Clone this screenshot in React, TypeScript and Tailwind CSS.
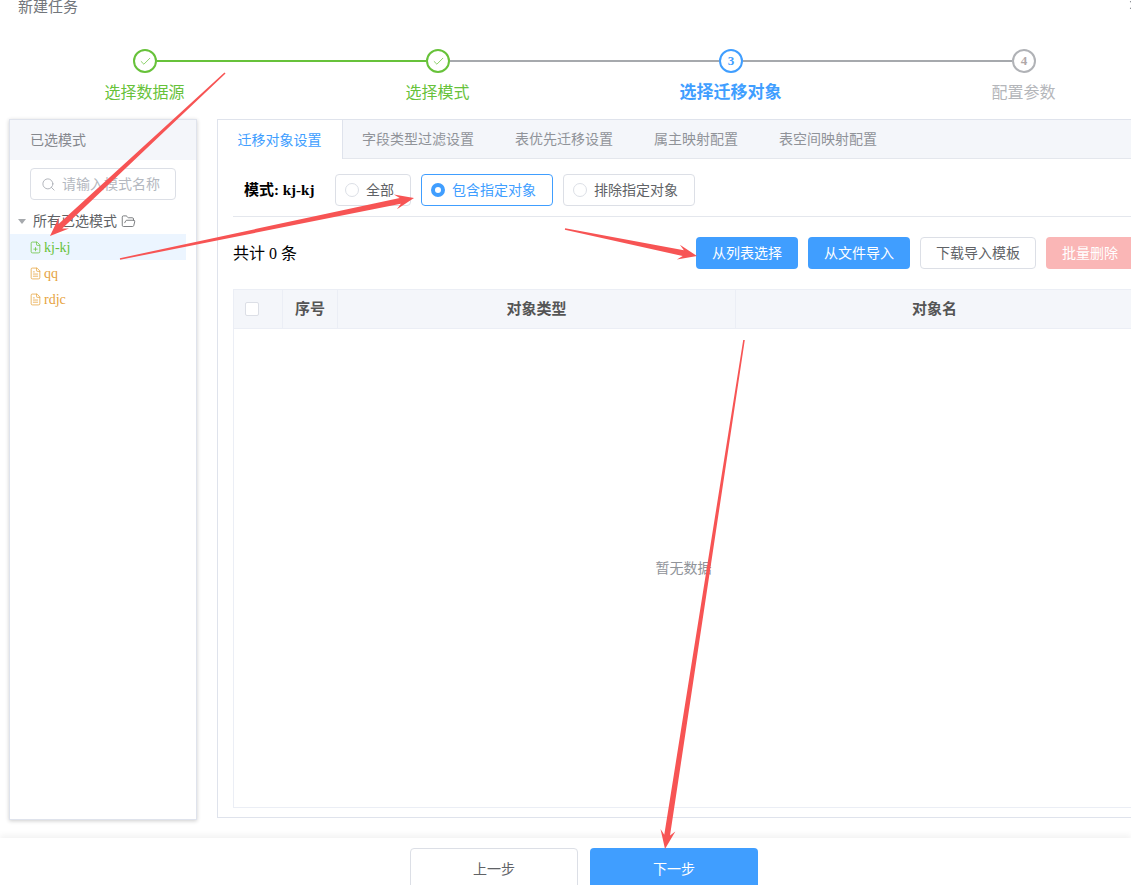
import { Check, FilePlus, FileText, FolderOpen, Search, X } from 'lucide-react';

const steps = [
  { label: '选择数据源', className: 'text-[#67c23a]' },
  { label: '选择模式', className: 'text-[#67c23a]' },
  { label: '选择迁移对象', className: 'text-[#409eff] font-bold text-[17px]' },
  { label: '配置参数', className: 'text-[#b4b6ba]' },
];

const tabs = ['字段类型过滤设置', '表优先迁移设置', '属主映射配置', '表空间映射配置'];

// hand drawn looking arrow: thin at the tail, wide near the head
function Arrow({ x1, y1, x2, y2 }: { x1: number; y1: number; x2: number; y2: number }) {
  const len = Math.hypot(x2 - x1, y2 - y1);
  const ux = (x2 - x1) / len;
  const uy = (y2 - y1) / len;
  const nx = -uy;
  const ny = ux;
  const at = (along: number, side: number) =>
    `${x1 + ux * along + nx * side},${y1 + uy * along + ny * side}`;
  const neck = len - 14;
  const points = [
    at(0, 0.8),
    at(neck, 2.9),
    at(len - 19, 7.5),
    at(len, 0),
    at(len - 19, -7.5),
    at(neck, -2.9),
    at(0, -0.8),
  ].join(' ');
  return <polygon points={points} fill="#f75454" />;
}

function StepCircle({ index }: { index: number }) {
  if (index < 2) {
    return (
      <div className="flex h-6 w-6 shrink-0 items-center justify-center rounded-full border-2 border-[#67c23a]">
        <Check size={13} strokeWidth={1.4} className="text-[#67c23a]" />
      </div>
    );
  }
  const color = index === 2 ? 'border-[#409eff] text-[#409eff]' : 'border-[#b0b2b6] text-[#b0a8a8]';
  return (
    <div className={`flex h-6 w-6 shrink-0 items-center justify-center rounded-full border-2 text-[13px] font-bold ${color}`}>
      {index + 1}
    </div>
  );
}

function RadioBox({ label, checked, className }: { label: string; checked?: boolean; className: string }) {
  return (
    <div
      className={`flex h-8 items-center rounded-[4px] border pl-[9px] ${
        checked ? 'border-[#409eff] text-[#409eff]' : 'border-[#dcdfe6] text-[#606266]'
      } ${className}`}
    >
      {checked ? (
        <span className="h-[14px] w-[14px] rounded-full border-[4px] border-[#409eff] bg-white" />
      ) : (
        <span className="h-[14px] w-[14px] rounded-full border border-[#dcdfe6] bg-white" />
      )}
      <span className="ml-[7px] text-[14px]">{label}</span>
    </div>
  );
}

function ActionButton({ label, className }: { label: string; className: string }) {
  return (
    <div className={`flex h-8 shrink-0 items-center justify-center rounded-[4px] pt-[1px] text-[14px] ${className}`}>
      {label}
    </div>
  );
}

export default function App() {
  return (
    <div className="relative h-[885px] w-[1131px] overflow-hidden bg-white font-['Liberation_Serif','Noto_Sans_CJK_SC',serif]">
      {/* title */}
      <div className="flex h-[15px] items-center justify-between pl-[18px] text-[15px] leading-[15px] text-[#72767b]">
        <span className="-mt-[1px]">新建任务</span>
        <X size={14} className="-mr-[10px] -mt-[6px] text-[#909399]" />
      </div>

      {/* stepper */}
      <div className="mt-[34px] flex w-[1131px] items-center pl-[133px] pr-[95px]">
        <StepCircle index={0} />
        <div className="h-[2px] flex-1 bg-[#67c23a]" />
        <StepCircle index={1} />
        <div className="h-[2px] flex-1 bg-[#a6a9ad]" />
        <StepCircle index={2} />
        <div className="h-[2px] flex-1 bg-[#a6a9ad]" />
        <StepCircle index={3} />
      </div>
      <div className="-ml-[2px] mt-[9px] grid h-[22px] w-[1172px] grid-cols-4 items-center text-center text-[16px] leading-[22px]">
        {steps.map((s) => (
          <div key={s.label} className={s.className}>
            {s.label}
          </div>
        ))}
      </div>

      {/* main */}
      <div className="mt-[15px] flex gap-[20px] pl-[9px]">
        {/* left tree panel */}
        <div className="h-[701px] w-[188px] shrink-0 border border-[#dfe3ec] shadow-[0_1px_4px_rgba(0,0,0,0.2)]">
          <div className="flex h-[40px] items-center bg-[#f4f6fa] pl-[20px] pt-[1px] text-[14px] text-[#85888e]">已选模式</div>
          <div className="ml-[20px] mt-[8px] flex h-8 w-[146px] items-center rounded-[4px] border border-[#dcdfe6] pl-[10px]">
            <Search size={15} strokeWidth={1.4} className="text-[#a8abb2]" />
            <span className="ml-[6px] whitespace-nowrap text-[14px] text-[#b4b8c0]">请输入模式名称</span>
          </div>
          <div className="mt-[10px] flex h-[22px] items-center pl-[8px] text-[14px] text-[#606266]">
            <span className="h-0 w-0 border-x-[4px] border-t-[5px] border-x-transparent border-t-[#a6a9ad]" />
            <span className="ml-[7px]">所有已选模式</span>
            <FolderOpen size={15} strokeWidth={1.3} className="ml-[4px] text-[#606266]" />
          </div>
          <div className="mt-[2px] flex h-[26px] w-[176px] items-center bg-[#ecf5ff] pl-[19px] text-[14px] text-[#67c23a]">
            <FilePlus size={13} strokeWidth={1.4} />
            <span className="ml-[2px]">kj-kj</span>
          </div>
          <div className="flex h-[26px] items-center pl-[19px] text-[14px] text-[#e6a23c]">
            <FileText size={13} strokeWidth={1.4} />
            <span className="ml-[2px]">qq</span>
          </div>
          <div className="flex h-[26px] items-center pl-[19px] text-[14px] text-[#e6a23c]">
            <FileText size={13} strokeWidth={1.4} />
            <span className="ml-[2px]">rdjc</span>
          </div>
        </div>

        {/* right panel */}
        <div className="h-[699px] w-[933px] shrink-0 border border-[#dfe3ec]">
          <div className="flex h-[39px] border-b border-[#e4e7ed] bg-[#f4f6fa] text-[14px]">
            <div className="-mb-[1px] flex h-[39px] w-[125px] items-center justify-center border-r border-[#dfe3ec] bg-white pr-[1px] pt-[1px] text-[#409eff]">
              迁移对象设置
            </div>
            <div className="flex items-center gap-[41px] pl-[19px] pt-[1px] text-[#909399]">
              {tabs.map((t) => (
                <span key={t}>{t}</span>
              ))}
            </div>
          </div>

          <div className="px-[15px]">
            <div className="flex h-[58px] items-start border-b border-[#e4e7ed] pt-[15px]">
              <span className="ml-[11px] flex h-8 w-[91px] items-center text-[15px] font-bold text-black">模式: kj-kj</span>
              <RadioBox label="全部" className="w-[76px]" />
              <RadioBox label="包含指定对象" checked className="ml-[10px] w-[132px]" />
              <RadioBox label="排除指定对象" className="ml-[10px] w-[132px]" />
            </div>

            <div className="mt-[20px] flex h-8 items-center">
              <span className="w-[463px] pt-[1px] text-[16px] text-black">共计 0 条</span>
              <div className="flex gap-[10px]">
                <ActionButton label="从列表选择" className="w-[102px] bg-[#409eff] text-white" />
                <ActionButton label="从文件导入" className="w-[102px] bg-[#409eff] text-white" />
                <ActionButton label="下载导入模板" className="w-[116px] border border-[#dcdfe6] text-[#606266]" />
                <ActionButton label="批量删除" className="w-[88px] bg-[#fab6b6] text-white" />
              </div>
            </div>

            {/* table */}
            <div className="mt-[20px] h-[519px] border border-[#ebeef5]">
              <div className="flex h-[39px] border-b border-[#ebeef5] bg-[#f4f6fa] text-[15px] font-bold text-[#555]">
                <div className="flex w-[49px] items-center border-r border-[#ebeef5] pl-[11px]">
                  <span className="h-[14px] w-[14px] rounded-[2px] border border-[#dcdfe6] bg-white" />
                </div>
                <div className="flex w-[55px] items-center justify-center border-r border-[#ebeef5]">序号</div>
                <div className="flex w-[398px] items-center justify-center border-r border-[#ebeef5]">对象类型</div>
                <div className="flex flex-1 items-center justify-center">对象名</div>
              </div>
              <div className="flex h-[478px] w-[899px] items-center justify-center text-[14px] text-[#909399]">
                暂无数据
              </div>
            </div>
          </div>
        </div>
      </div>

      {/* footer */}
      <div className="mt-[18px] h-[47px] bg-white shadow-[0_-3px_6px_rgba(0,0,0,0.05)]">
        <div className="flex gap-[12px] pl-[410px] pt-[10px] text-[14px]">
          <div className="flex h-[42px] w-[168px] items-center justify-center rounded-t-[4px] border border-[#dcdfe6] text-[#606266]">
            上一步
          </div>
          <div className="flex h-[42px] w-[168px] items-center justify-center rounded-t-[4px] bg-[#409eff] text-white">
            下一步
          </div>
        </div>
      </div>

      {/* red annotation arrows drawn on top of the screenshot */}
      <svg className="pointer-events-none absolute left-0 top-0" width={1131} height={885}>
        <Arrow x1={225} y1={73} x2={50} y2={236} />
        <Arrow x1={120} y1={259} x2={414} y2={198} />
        <Arrow x1={565} y1={229} x2={697} y2={256} />
        <Arrow x1={744} y1={340} x2={665} y2={849} />
      </svg>
    </div>
  );
}
